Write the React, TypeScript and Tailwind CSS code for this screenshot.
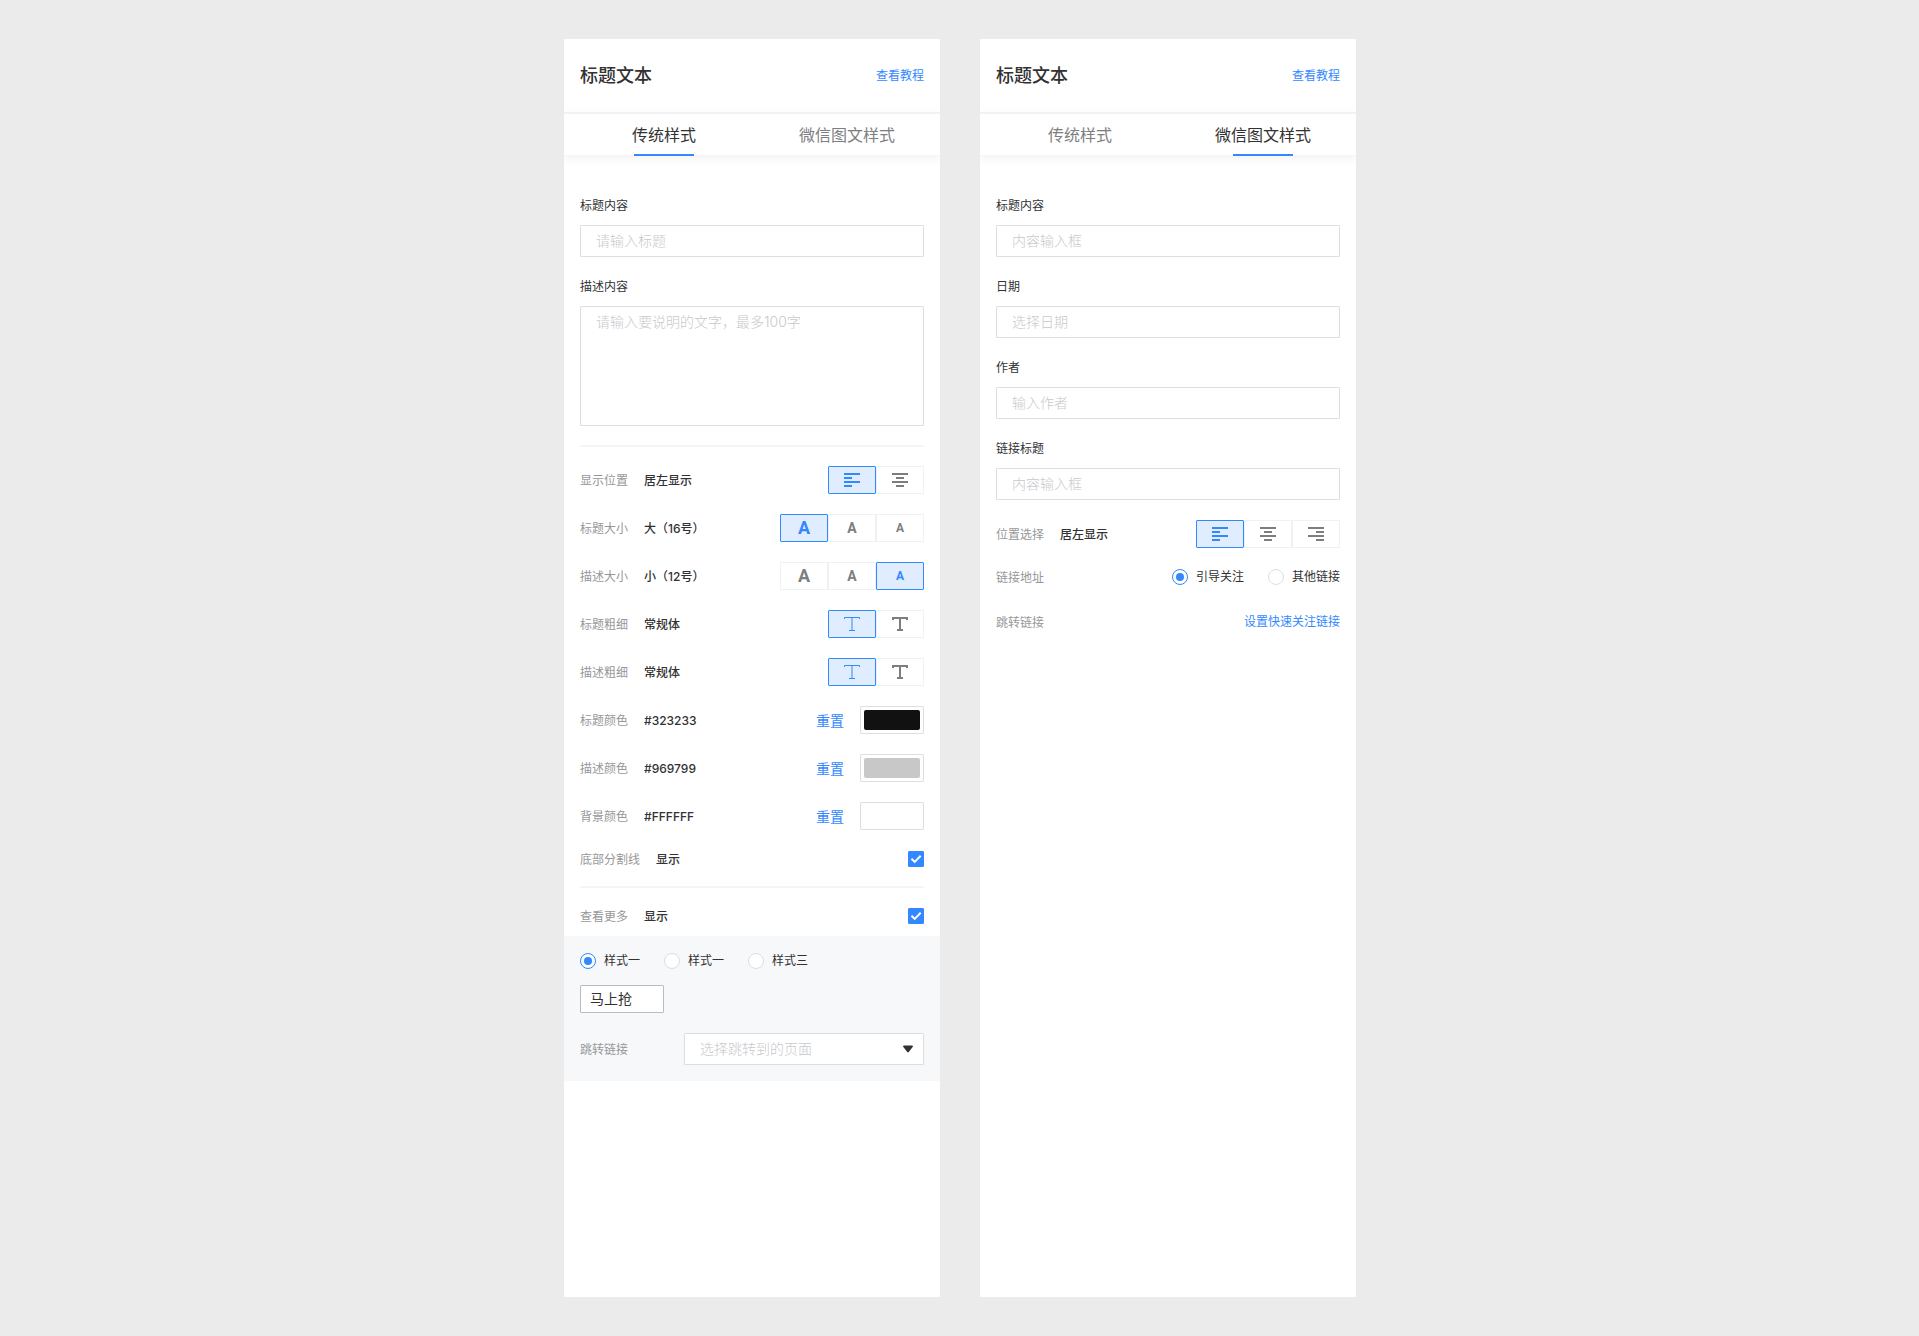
import { useId, useState, type ReactNode } from 'react'
import clsx from 'clsx'

type Option = { label: string; icon: ReactNode }

const LINES = {
    left: [0, 0, 0, 0],
    center: [0, 4, 0, 4],
    right: [0, 8, 0, 8],
}

function AlignIcon({ to }: { to: keyof typeof LINES }) {
    return (
        <svg width="16" height="14" viewBox="0 0 16 14" fill="currentColor" aria-hidden="true">
            {LINES[to].map((x, i) => (
                <rect key={i} x={x} y={i * 4} width={i % 2 ? 8 : 16} height="2" />
            ))}
        </svg>
    )
}

function ThinT() {
    return (
        <svg width="16" height="14" viewBox="0 0 16 14" fill="none" stroke="currentColor" aria-hidden="true">
            <path d="M.5 2v-1.500h15V2M8 .5v13M5 13.5h6" />
        </svg>
    )
}

function ThickT() {
    return (
        <svg width="16" height="14" viewBox="0 0 16 14" fill="none" stroke="currentColor" strokeWidth="2" aria-hidden="true">
            <path d="M1 3V1h14v2M8 1v12M5 13h6" />
        </svg>
    )
}

const align: Option[] = [
    { label: '居左显示', icon: <AlignIcon to="left" /> },
    { label: '居中显示', icon: <AlignIcon to="center" /> },
    { label: '居右显示', icon: <AlignIcon to="right" /> },
]

const sizes: Option[] = [
    { label: '大（16号）', icon: <span className="text-lg leading-none">A</span> },
    { label: '中（14号）', icon: <span className="text-sm leading-none">A</span> },
    { label: '小（12号）', icon: <span className="text-xs leading-none">A</span> },
]

const weights: Option[] = [
    { label: '常规体', icon: <ThinT /> },
    { label: '加粗体', icon: <ThickT /> },
]

function Row({ label, value, tall = true, children }: { label: string; value?: string; tall?: boolean; children: ReactNode }) {
    return (
        <div className={clsx('flex items-center justify-between text-xs', tall ? 'h-7' : 'h-[18px]')}>
            <div className="flex gap-4 pt-px">
                <span className="text-[#969799]">{label}</span>
                {value && <span className="font-medium text-[#323233]">{value}</span>}
            </div>
            <div className="flex items-center">{children}</div>
        </div>
    )
}

function Segment({ label, options, initial = 0 }: { label: string; options: Option[]; initial?: number }) {
    const [active, setActive] = useState(initial)
    return (
        <Row label={label} value={options[active].label}>
            {options.map((option, i) => (
                <button
                    key={option.label}
                    type="button"
                    aria-label={option.label}
                    aria-pressed={i === active}
                    onClick={() => setActive(i)}
                    className={clsx(
                        'flex h-7 w-12 items-center justify-center border font-[Roboto,sans-serif] font-bold',
                        i === active ? 'rounded-[1px] border-[#3388ff] bg-[#e0edff] text-[#3388ff]' : 'border-[#f0f1f3] text-[#7d7e80]',
                    )}
                >
                    {option.icon}
                </button>
            ))}
        </Row>
    )
}

function Field({ label, placeholder, multiline }: { label: string; placeholder: string; multiline?: boolean }) {
    const id = useId()
    const box = 'block w-full rounded-[1px] border border-[#dcdee0] px-[15px] text-sm font-light text-[#323233] outline-none placeholder:text-[#c8c9cc]'
    return (
        <div>
            <label htmlFor={id} className="mb-3 block pt-0.5 text-xs leading-[15px] text-[#323233]">{label}</label>
            {multiline
                ? <textarea id={id} placeholder={placeholder} className={clsx(box, 'h-[120px] resize-none py-[5px]')} />
                : <input id={id} type="text" placeholder={placeholder} className={clsx(box, 'h-8 pb-0.5')} />}
        </div>
    )
}

function Radio({ name, label, checked }: { name: string; label: string; checked?: boolean }) {
    return (
        <label className="flex items-center gap-2 text-xs text-[#323233]">
            <input
                type="radio"
                name={name}
                defaultChecked={checked}
                className="grid size-4 appearance-none place-content-center rounded-full border border-[#dcdee0] bg-white before:size-2 before:rounded-full checked:border-[#3388ff] checked:before:bg-[#3388ff]"
            />
            {label}
        </label>
    )
}

function Toggle({ label }: { label: string }) {
    return (
        <Row label={label} value="显示" tall={false}>
            <span className="grid">
                <input
                    type="checkbox"
                    aria-label={label}
                    defaultChecked
                    className="peer col-start-1 row-start-1 size-4 appearance-none rounded-[1px] border border-[#dcdee0] checked:border-[#3388ff] checked:bg-[#3388ff]"
                />
                <svg
                    viewBox="0 0 16 16"
                    className="pointer-events-none invisible col-start-1 row-start-1 size-4 peer-checked:visible"
                    fill="none"
                    stroke="white"
                    strokeWidth="2"
                    aria-hidden="true"
                >
                    <path d="M3.500 7.800l3.200 3.100L12.700 4.700" />
                </svg>
            </span>
        </Row>
    )
}

function ColorRow({ label, value, swatch }: { label: string; value: string; swatch: string }) {
    return (
        <Row label={label} value={value}>
            <button type="button" className="mr-4 pt-0.5 text-sm text-[#3388ff]">重置</button>
            <button type="button" aria-label={label} className="h-7 w-16 rounded-[1px] border border-[#dcdee0] p-[3px]">
                <span className={clsx('block h-full rounded-xs', swatch)} />
            </button>
        </Row>
    )
}

function Divider({ className }: { className: string }) {
    return <hr className={clsx('h-0.5 border-0 bg-[#f5f5f6]', className)} />
}

function Panel({ active, children }: { active: number; children: ReactNode }) {
    return (
        <section className="min-w-0 flex-1 overflow-hidden bg-white">
            <header className="flex h-[75px] items-center justify-between border-b-2 border-[#f4f5f8] px-4 pt-px">
                <h1 className="text-lg font-medium text-[#323233]">标题文本</h1>
                <a href="#" className="text-xs text-[#3388ff]">查看教程</a>
            </header>
            <nav className="flex h-[42px] gap-px border-b border-[#f7f7f7] pr-0.5 pl-[9px] shadow-[0_2px_10px_rgba(0,0,0,0.06)]">
                {['传统样式', '微信图文样式'].map((tab, i) => (
                    <button
                        key={tab}
                        type="button"
                        className={clsx(
                            '-mb-px flex flex-1 flex-col items-center justify-between pt-[9px] text-base',
                            i === active ? 'text-[#323233]' : 'text-[#7d7e80]',
                        )}
                    >
                        {tab}
                        {i === active && <span className="h-0.5 w-15 bg-[#3388ff]" />}
                    </button>
                ))}
            </nav>
            {children}
        </section>
    )
}

function ClassicForm() {
    return (
        <form>
            <div className="px-4 pt-10 pb-[11px]">
                <div className="space-y-5">
                    <Field label="标题内容" placeholder="请输入标题" />
                    <Field label="描述内容" placeholder="请输入要说明的文字，最多100字" multiline />
                </div>
                <Divider className="my-[19px]" />
                <div className="space-y-5">
                    <Segment label="显示位置" options={align.slice(0, 2)} />
                    <Segment label="标题大小" options={sizes} />
                    <Segment label="描述大小" options={sizes} initial={2} />
                    <Segment label="标题粗细" options={weights} />
                    <Segment label="描述粗细" options={weights} />
                    <ColorRow label="标题颜色" value="#323233" swatch="bg-[#111111]" />
                    <ColorRow label="描述颜色" value="#969799" swatch="bg-[#c8c8c8]" />
                    <ColorRow label="背景颜色" value="#FFFFFF" swatch="bg-white" />
                    <Toggle label="底部分割线" />
                </div>
                <Divider className="mt-[18px] mb-[19px]" />
                <Toggle label="查看更多" />
            </div>
            <div className="bg-[#f7f8fa] p-4">
                <div className="flex gap-6 pt-px">
                    <Radio name="style" label="样式一" checked />
                    <Radio name="style" label="样式一" />
                    <Radio name="style" label="样式三" />
                </div>
                <input
                    type="text"
                    aria-label="按钮文案"
                    defaultValue="马上抢"
                    className="mt-4 block h-7 w-21 rounded-[1px] border border-[#bbbcbe] bg-white px-[9px] pb-0.5 text-sm text-[#323233] outline-none"
                />
                <div className="mt-5 flex items-center justify-between">
                    <label htmlFor="target" className="pt-px text-xs text-[#969799]">跳转链接</label>
                    <div className="relative w-60">
                        <select
                            id="target"
                            className="block h-8 w-full appearance-none rounded-[1px] border border-[#dcdee0] bg-white px-[15px] text-sm font-light text-[#c8c9cc] outline-none"
                        >
                            <option>选择跳转到的页面</option>
                        </select>
                        <svg
                            className="pointer-events-none absolute top-3 right-[11px]"
                            width="10"
                            height="8"
                            viewBox="0 0 10 8"
                            fill="#323233"
                            aria-hidden="true"
                        >
                            <path d="M1 .5h8q1.2 0 .8 1.2L6 6.7q-1 1.2-2 0L.2 1.700Q-.2.5 1 .5z" />
                        </svg>
                    </div>
                </div>
            </div>
        </form>
    )
}

function WechatForm() {
    return (
        <form className="space-y-5 px-4 pt-10">
            <Field label="标题内容" placeholder="内容输入框" />
            <Field label="日期" placeholder="选择日期" />
            <Field label="作者" placeholder="输入作者" />
            <Field label="链接标题" placeholder="内容输入框" />
            <Segment label="位置选择" options={align} />
            <Row label="链接地址" tall={false}>
                <div className="flex gap-6">
                    <Radio name="address" label="引导关注" checked />
                    <Radio name="address" label="其他链接" />
                </div>
            </Row>
            <div className="pt-[7px]">
                <Row label="跳转链接" tall={false}>
                    <a href="#" className="text-[#3388ff]">设置快速关注链接</a>
                </Row>
            </div>
        </form>
    )
}

export default function App() {
    return (
        <main lang="zh-CN" className="flex min-h-screen justify-center bg-[#ebebeb] py-[39px] pl-px font-[Inter,'Noto_Sans_CJK_SC',sans-serif]">
            <div className="flex w-full max-w-[792px] gap-10">
                <Panel active={0}>
                    <ClassicForm />
                </Panel>
                <Panel active={1}>
                    <WechatForm />
                </Panel>
            </div>
        </main>
    )
}
